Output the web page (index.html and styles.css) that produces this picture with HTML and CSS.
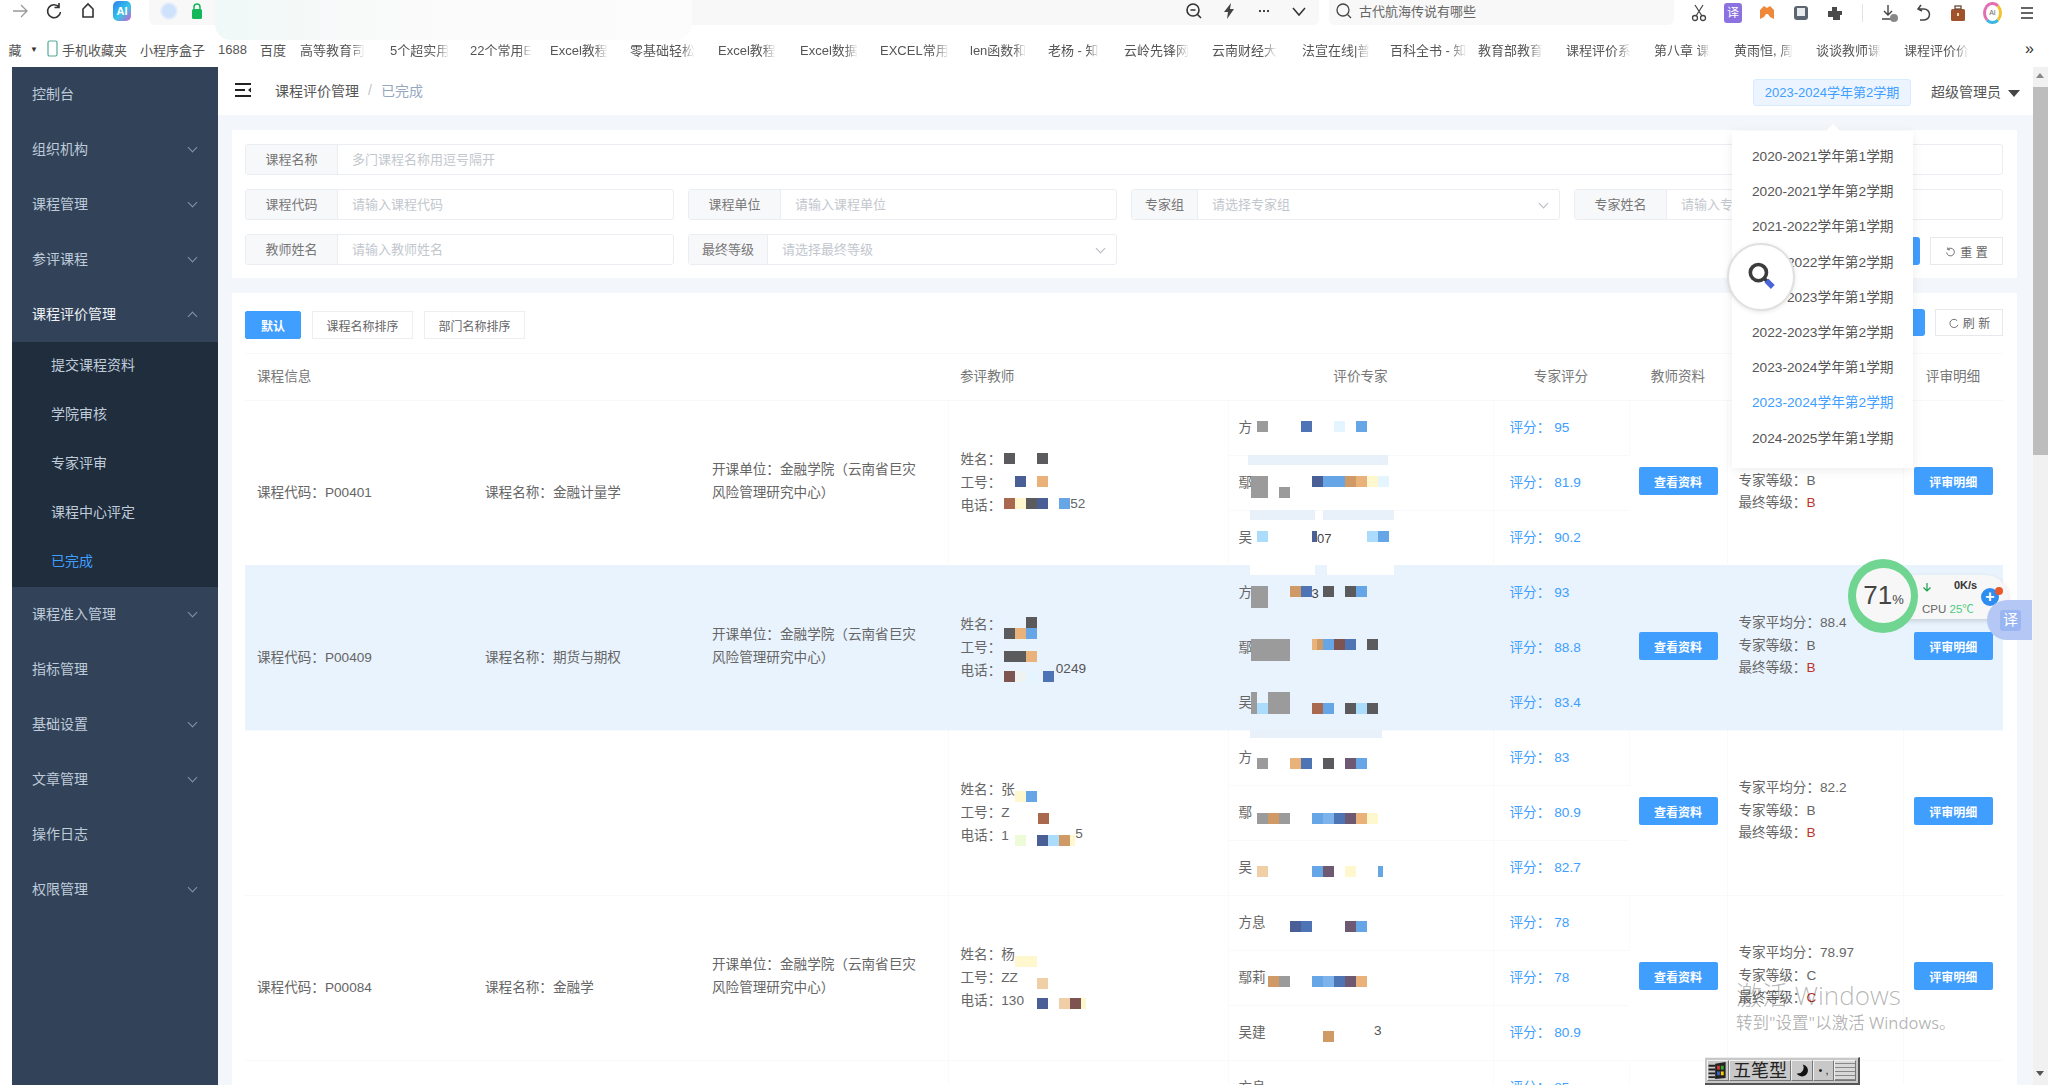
FILE: index.html
```html
<!DOCTYPE html>
<html lang="zh-CN">

<head>
    <meta charset="UTF-8" />
    <title>课程评价管理</title>
    <link rel="stylesheet" href="styles.css">
</head>

<body>
    <div class="topbar">
        <div class="nav-icons">
            <svg class="ico" viewBox="0 0 18 18"><path d="M2 9h14M10 3l6 6-6 6" fill="none" stroke="#999" stroke-width="1.3"/></svg>
            <svg class="ico" viewBox="0 0 18 18"><path d="M14 5a6.500 6.500 0 1 0 1.500 5M14 1v4.500h-4.500" fill="none" stroke="#333" stroke-width="1.600"/></svg>
            <svg class="ico" viewBox="0 0 18 18"><path d="M4 15V7l5-5 5 5v8z" fill="none" stroke="#333" stroke-width="1.600"/></svg>
            <span class="ai-badge">AI</span>
        </div>
        <div class="address">
            <span class="shield"></span>
            <svg class="ico" viewBox="0 0 18 18"><path d="M6 8V5a3 3 0 0 1 6 0v3" fill="none" stroke="#14b85a" stroke-width="1.500"/><rect x="4" y="7" width="10" height="10" rx="1.500" fill="#14b85a"/></svg>
            <span class="address-space"></span>
            <div class="address-tools">
                <svg class="ico" viewBox="0 0 18 18"><circle cx="8" cy="8" r="6" fill="none" stroke="#333" stroke-width="1.600"/><path d="M12.500 12.500L16 16M5.500 8h5" stroke="#333" stroke-width="1.600"/></svg>
                <svg class="ico" viewBox="0 0 18 18"><path d="M11 1L4 10h4l-1 7 7-10h-4z" fill="#444"/></svg>
                <svg class="ico" viewBox="0 0 18 18"><path d="M4 9h2M8 9h2M12 9h2" stroke="#444" stroke-width="2"/></svg>
                <svg class="ico" viewBox="0 0 18 18"><path d="M3 6l6 7 6-7" fill="none" stroke="#333" stroke-width="1.500"/></svg>
            </div>
        </div>
        <div class="search-box">
            <svg class="ico" viewBox="0 0 18 18"><circle cx="8" cy="8" r="6" fill="none" stroke="#444" stroke-width="1.300"/><path d="M12.500 12.500L16 16" stroke="#444" stroke-width="1.300"/></svg>
            <span>古代航海传说有哪些</span>
        </div>
        <div class="ext-icons">
            <svg class="ico" viewBox="0 0 18 18"><path d="M5 1l7 11M13 1L6 12" stroke="#444" stroke-width="1.200"/><circle cx="5" cy="14" r="2.500" fill="none" stroke="#444" stroke-width="1.300"/><circle cx="13" cy="14" r="2.500" fill="none" stroke="#444" stroke-width="1.300"/></svg>
            <span class="ext-yi">译</span>
            <svg class="ico" viewBox="0 0 18 18"><path d="M2 15V6l4-4 3 2 3-2 4 4v9l-4-2-2-3H8l-2 3z" fill="#f0883a"/></svg>
            <svg class="ico" viewBox="0 0 18 18"><rect x="2" y="2" width="14" height="14" rx="3" fill="#5d6670"/><rect x="5" y="4" width="8" height="8" fill="#e9ecef"/></svg>
            <svg class="ico" viewBox="0 0 18 18"><path d="M2 7h4V3h5v4h5v4h-2v5H7v-3H2z" fill="#4a4a4a"/></svg>
            <span class="ext-divider"></span>
            <svg class="ico" viewBox="0 0 18 18"><path d="M7 1v10M3 7l4 4 4-4M1 15h10" fill="none" stroke="#444" stroke-width="1.400"/><circle cx="13" cy="14" r="4" fill="#888"/></svg>
            <svg class="ico" viewBox="0 0 18 18"><path d="M6 1L3 5l4 2M3 5h6a5 5 0 0 1 0 11H5" fill="none" stroke="#444" stroke-width="1.500"/></svg>
            <svg class="ico" viewBox="0 0 18 18"><rect x="2" y="5" width="14" height="12" rx="1.500" fill="#a0522d"/><rect x="6" y="2" width="6" height="3" fill="none" stroke="#6b4a38" stroke-width="1.300"/><rect x="8" y="9" width="2" height="3" fill="#f3d7a5"/></svg>
            <span class="ext-round">AI</span>
            <svg class="ico" viewBox="0 0 18 18"><path d="M3 4h12M3 9h12M3 14h12" stroke="#333" stroke-width="1.500"/></svg>
        </div>
    </div>

    <div class="bookmarks">
        <span class="bm-lead">藏</span>
        <span class="bm-caret">▼</span>
        <svg class="bm-phone" viewBox="0 0 14 18"><rect x="2" y="1" width="9" height="15" rx="1.500" fill="none" stroke="#5a9" stroke-width="1.200"/></svg>
        <span class="bm w78">手机收藏夹</span>
        <span class="bm w78">小程序盒子</span>
        <span class="bm w42">1688</span>
        <span class="bm w40">百度</span>
        <span class="bm w90"><span class="fade">高等教育司</span></span>
        <span class="bm w80"><span class="fade">5个超实用</span></span>
        <span class="bm w80"><span class="fade">22个常用E</span></span>
        <span class="bm w80"><span class="fade">Excel教程</span></span>
        <span class="bm w88"><span class="fade">零基础轻松</span></span>
        <span class="bm w82"><span class="fade">Excel教程</span></span>
        <span class="bm w80"><span class="fade">Excel数据</span></span>
        <span class="bm w90"><span class="fade">EXCEL常用</span></span>
        <span class="bm w78"><span class="fade">len函数和</span></span>
        <span class="bm w76"><span class="fade">老杨 - 知</span></span>
        <span class="bm w88"><span class="fade">云岭先锋网</span></span>
        <span class="bm w90"><span class="fade">云南财经大</span></span>
        <span class="bm w88"><span class="fade">法宣在线|普</span></span>
        <span class="bm w88"><span class="fade">百科全书 - 知</span></span>
        <span class="bm w88"><span class="fade">教育部教育</span></span>
        <span class="bm w88"><span class="fade">课程评价系</span></span>
        <span class="bm w80"><span class="fade">第八章 课</span></span>
        <span class="bm w82"><span class="fade">黄雨恒, 周</span></span>
        <span class="bm w88"><span class="fade">谈谈教师课</span></span>
        <span class="bm w72"><span class="fade">课程评价价</span></span>
        <span class="bm-more">»</span>
    </div>

    <div class="app">
        <div class="sidebar">
            <a class="menu">控制台</a>
            <a class="menu has-sub">组织机构</a>
            <a class="menu has-sub">课程管理</a>
            <a class="menu has-sub">参评课程</a>
            <a class="menu has-sub open">课程评价管理</a>
            <div class="submenu">
                <a>提交课程资料</a>
                <a>学院审核</a>
                <a>专家评审</a>
                <a>课程中心评定</a>
                <a class="active">已完成</a>
            </div>
            <a class="menu has-sub">课程准入管理</a>
            <a class="menu">指标管理</a>
            <a class="menu has-sub">基础设置</a>
            <a class="menu has-sub">文章管理</a>
            <a class="menu">操作日志</a>
            <a class="menu has-sub">权限管理</a>
        </div>

        <div class="main">
            <div class="header">
                <svg class="hamburger" viewBox="0 0 16 14"><path d="M0 1h16M0 7h10M0 13h16" stroke="#222" stroke-width="2"/><path d="M16 4.500L13 7l3 2.500z" fill="#222"/></svg>
                <span class="crumb">课程评价管理</span>
                <span class="crumb-sep">/</span>
                <span class="crumb-now">已完成</span>
                <span class="header-space"></span>
                <span class="term-btn">2023-2024学年第2学期</span>
                <span class="user">超级管理员</span>
                <span class="caret"></span>
            </div>

            <div class="content">
                <div class="card filter-card">
                    <div class="filters">
                        <div class="field span-all"><label>课程名称</label><input placeholder="多门课程名称用逗号隔开"></div>
                        <div class="field"><label>课程代码</label><input placeholder="请输入课程代码"></div>
                        <div class="field"><label>课程单位</label><input placeholder="请输入课程单位"></div>
                        <div class="field"><label class="lbl-66">专家组</label><input placeholder="请选择专家组"><span class="sel-arrow"></span></div>
                        <div class="field"><label>专家姓名</label><input placeholder="请输入专家姓名"></div>
                        <div class="field"><label>教师姓名</label><input placeholder="请输入教师姓名"></div>
                        <div class="field"><label class="lbl-79">最终等级</label><input placeholder="请选择最终等级"><span class="sel-arrow"></span></div>
                        <div class="filter-btns span-two">
                            <button class="btn-search">搜 索</button>
                            <button class="btn-plain">
                                <svg viewBox="0 0 12 12"><path d="M3 2.500a4.200 4.200 0 1 1-1.200 3.500M3 .5v2.500h2.500" fill="none" stroke="#666"/></svg>重 置
                            </button>
                        </div>
                    </div>
                </div>

                <div class="card list-card">
                    <div class="tools">
                        <button class="sort on">默认</button>
                        <button class="sort">课程名称排序</button>
                        <button class="sort">部门名称排序</button>
                        <span class="tools-space"></span>
                        <button class="btn-export">导 出</button>
                        <button class="btn-refresh">
                            <svg viewBox="0 0 12 12"><path d="M10 3a4.500 4.500 0 1 0 .8 4.500" fill="none" stroke="#666"/></svg>刷 新
                        </button>
                    </div>

                    <table class="grid">
                        <colgroup>
                            <col class="c-info"><col class="c-teacher"><col class="c-expert"><col class="c-score"><col class="c-doc"><col class="c-avg"><col class="c-detail">
                        </colgroup>
                        <thead>
                            <tr>
                                <th class="left">课程信息</th>
                                <th class="left">参评教师</th>
                                <th>评价专家</th>
                                <th>专家评分</th>
                                <th>教师资料</th>
                                <th>评审结果</th>
                                <th>评审明细</th>
                            </tr>
                        </thead>
                        <tbody>
                            <!-- P00401 -->
                            <tr>
                                <td rowspan="3" class="info">
                                    <div class="info-row">
                                        <span class="i-code">课程代码：P00401</span>
                                        <span class="i-name">课程名称：金融计量学</span>
                                        <span class="i-unit">开课单位：金融学院（云南省巨灾风险管理研究中心）</span>
                                    </div>
                                </td>
                                <td rowspan="3" class="teacher">
                                    <div class="t-line">姓名：<span class="mz gap3"><i class="dk"></i><i></i><i></i><i class="dk"></i></span></div>
                                    <div class="t-line">工号：<span class="mz gap3"><i></i><i class="nv"></i><i></i><i class="or"></i></span></div>
                                    <div class="t-line">电话：<span class="mz gap3"><i class="br"></i><i class="yl"></i><i class="dk"></i><i class="nv"></i><i></i><i class="bl"></i></span>52</div>
                                </td>
                                <td class="expert"><span class="en">方</span><span class="mz"><i class="gy"></i><i></i><i></i><i></i><i class="bn"></i><i></i><i></i><i class="pl"></i><i></i><i class="bl"></i></span></td>
                                <td class="score">评分：<b>95</b></td>
                                <td rowspan="3" class="act"><button class="btn-blue">查看资料</button></td>
                                <td rowspan="3" class="avg">
                                    <div>专家平均分：86.3</div>
                                    <div>专家等级：B</div>
                                    <div>最终等级：<em>B</em></div>
                                </td>
                                <td rowspan="3" class="act"><button class="btn-blue">评审明细</button></td>
                            </tr>
                            <tr>
                                <td class="expert"><span class="en">鄢</span><span class="mz"><i class="gy tl back"></i><i></i><i class="gy low"></i><i></i><i></i><i class="nv"></i><i class="bl"></i><i class="bl"></i><i class="tn"></i><i class="or"></i><i class="yl"></i><i class="pl"></i></span></td>
                                <td class="score">评分：<b>81.9</b></td>
                            </tr>
                            <tr>
                                <td class="expert"><span class="en">吴</span><span class="mz"><i class="lb"></i><i></i><i></i><i></i><i></i><i class="nv half"></i><b class="mz-text">07</b><i></i><i></i><i class="lb"></i><i class="bl"></i></span></td>
                                <td class="score">评分：<b>90.2</b></td>
                            </tr>

                            <!-- P00409 -->
                            <tr class="on">
                                <td rowspan="3" class="info">
                                    <div class="info-row">
                                        <span class="i-code">课程代码：P00409</span>
                                        <span class="i-name">课程名称：期货与期权</span>
                                        <span class="i-unit">开课单位：金融学院（云南省巨灾风险管理研究中心）</span>
                                    </div>
                                </td>
                                <td rowspan="3" class="teacher">
                                    <div class="t-line">姓名：<span class="mz gap3 dn10"><i class="dk"></i><i class="or"></i><i class="bl cap-dk"></i></span></div>
                                    <div class="t-line">工号：<span class="mz gap3 dn10"><i class="dk"></i><i class="dk"></i><i class="or"></i></span></div>
                                    <div class="t-line">电话：<span class="mz gap3 dn8"><i class="mr"></i><i class="pl-soft"></i><i class="pl"></i><i class="half"></i><i class="bn"></i></span><span class="tail">0249</span></div>
                                </td>
                                <td class="expert"><span class="en">方</span><span class="mz"><i class="gy tl back"></i><i></i><i></i><i class="tn"></i><i class="bn"></i><b class="mz-text small">3</b><i class="dk"></i><i></i><i class="dk"></i><i class="bl"></i></span></td>
                                <td class="score">评分：<b>93</b></td>
                                <td rowspan="3" class="act"><button class="btn-blue">查看资料</button></td>
                                <td rowspan="3" class="avg">
                                    <div>专家平均分：88.4</div>
                                    <div>专家等级：B</div>
                                    <div>最终等级：<em>B</em></div>
                                </td>
                                <td rowspan="3" class="act"><button class="btn-blue">评审明细</button></td>
                            </tr>
                            <tr class="on">
                                <td class="expert"><span class="en">鄢</span><span class="mz up2"><i class="gy tl w3"></i><i></i><i></i><i class="or half"></i><i class="tn half"></i><i class="bl"></i><i class="mr"></i><i class="bn"></i><i></i><i class="dk"></i></span></td>
                                <td class="score">评分：<b>88.8</b></td>
                            </tr>
                            <tr class="on">
                                <td class="expert"><span class="en">吴</span><span class="mz dn7"><i class="gy nib up-tall"></i><i class="lb"></i><i class="gy up-tall w2"></i><i></i><i></i><i class="br"></i><i class="bl"></i><i></i><i class="dk"></i><i class="lb"></i><i class="dk"></i></span></td>
                                <td class="score">评分：<b>83.4</b></td>
                            </tr>

                            <!-- 张 -->
                            <tr>
                                <td rowspan="3" class="info"></td>
                                <td rowspan="3" class="teacher">
                                    <div class="t-line">姓名：张<span class="mz dn8"><i class="yl"></i><i class="bl"></i></span></div>
                                    <div class="t-line">工号：Z<span class="mz dn7 gap6"><i></i><i></i><i class="br"></i></span></div>
                                    <div class="t-line">电话：1<span class="mz dn7 gap6"><i class="pl-green"></i><i></i><i class="nv"></i><i class="lb"></i><i class="tn"></i><i class="yl half"></i></span>5</div>
                                </td>
                                <td class="expert"><span class="en">方</span><span class="mz dn7"><i class="gy"></i><i></i><i></i><i class="or"></i><i class="bn"></i><i></i><i class="dk"></i><i></i><i class="pk"></i><i class="bl"></i></span></td>
                                <td class="score">评分：<b>83</b></td>
                                <td rowspan="3" class="act"><button class="btn-blue">查看资料</button></td>
                                <td rowspan="3" class="avg">
                                    <div>专家平均分：82.2</div>
                                    <div>专家等级：B</div>
                                    <div>最终等级：<em>B</em></div>
                                </td>
                                <td rowspan="3" class="act"><button class="btn-blue">评审明细</button></td>
                            </tr>
                            <tr>
                                <td class="expert"><span class="en">鄢</span><span class="mz dn7"><i class="gy"></i><i class="tn"></i><i class="gy"></i><i></i><i></i><i class="bl"></i><i class="lb2"></i><i class="bn"></i><i class="pk"></i><i class="or"></i><i class="yl"></i></span></td>
                                <td class="score">评分：<b>80.9</b></td>
                            </tr>
                            <tr>
                                <td class="expert"><span class="en">吴</span><span class="mz dn5"><i class="pc"></i><i></i><i></i><i></i><i></i><i class="bl"></i><i class="pk"></i><i></i><i class="yl"></i><i></i><i></i><i class="bl half"></i></span></td>
                                <td class="score">评分：<b>82.7</b></td>
                            </tr>

                            <!-- P00084 -->
                            <tr>
                                <td rowspan="3" class="info">
                                    <div class="info-row">
                                        <span class="i-code">课程代码：P00084</span>
                                        <span class="i-name">课程名称：金融学</span>
                                        <span class="i-unit">开课单位：金融学院（云南省巨灾风险管理研究中心）</span>
                                    </div>
                                </td>
                                <td rowspan="3" class="teacher">
                                    <div class="t-line">姓名：杨<span class="mz dn8"><i class="yl"></i><i class="yl"></i></span></div>
                                    <div class="t-line">工号：ZZ<span class="mz dn7 gap8"><i></i><i class="pc"></i></span></div>
                                    <div class="t-line">电话：130<span class="mz dn5 gap13"><i class="nv"></i><i></i><i class="pc"></i><i class="mr"></i><i class="yl half"></i></span></div>
                                </td>
                                <td class="expert"><span class="en">方息</span><span class="mz dn5"><i></i><i></i><i></i><i class="nv"></i><i class="bn"></i><i></i><i></i><i></i><i class="pk"></i><i class="bl"></i></span></td>
                                <td class="score">评分：<b>78</b></td>
                                <td rowspan="3" class="act"><button class="btn-blue">查看资料</button></td>
                                <td rowspan="3" class="avg">
                                    <div>专家平均分：78.97</div>
                                    <div>专家等级：C</div>
                                    <div>最终等级：<em>C</em></div>
                                </td>
                                <td rowspan="3" class="act"><button class="btn-blue">评审明细</button></td>
                            </tr>
                            <tr>
                                <td class="expert"><span class="en">鄢莉</span><span class="mz dn5"><i></i><i class="tn"></i><i class="gy"></i><i></i><i></i><i class="bl"></i><i class="lb2"></i><i class="bn"></i><i class="pk"></i><i class="or"></i></span></td>
                                <td class="score">评分：<b>78</b></td>
                            </tr>
                            <tr>
                                <td class="expert"><span class="en">吴建</span><span class="mz dn5"><i></i><i></i><i></i><i></i><i></i><i></i><i class="tn"></i><i></i><i></i><i></i><i class="half"></i></span><span class="tail">3</span></td>
                                <td class="score">评分：<b>80.9</b></td>
                            </tr>

                            <tr>
                                <td class="info"></td>
                                <td class="teacher"></td>
                                <td class="expert"><span class="en">方息</span></td>
                                <td class="score">评分：<b>85</b></td>
                                <td></td>
                                <td></td>
                                <td></td>
                            </tr>
                        </tbody>
                    </table>
                </div>
            </div>
        </div>

        <div class="scrollbar">
            <span class="sb-up"></span>
            <span class="sb-thumb"></span>
            <span class="sb-space"></span>
            <span class="sb-down"></span>
        </div>
    </div>

    <!-- things that float over the page -->
    <div class="blur-blob"></div>

    <span class="smear s1"></span>
    <span class="smear s2"></span>
    <span class="smear s3"></span>
    <span class="smear s4 white"></span>
    <span class="smear s5 white"></span>
    <span class="smear s6"></span>

    <div class="term-menu">
        <span class="term-tip"></span>
        <a>2020-2021学年第1学期</a>
        <a>2020-2021学年第2学期</a>
        <a>2021-2022学年第1学期</a>
        <a>2021-2022学年第2学期</a>
        <a>2022-2023学年第1学期</a>
        <a>2022-2023学年第2学期</a>
        <a>2023-2024学年第1学期</a>
        <a class="current">2023-2024学年第2学期</a>
        <a>2024-2025学年第1学期</a>
    </div>

    <div class="magnifier">
        <svg viewBox="0 0 40 40"><circle cx="16" cy="14" r="9" fill="none" stroke="#3c3c3c" stroke-width="4"/><path d="M23 21l3 3" stroke="#3c3c3c" stroke-width="4"/><path d="M25 23l7 7" stroke="#4a63d8" stroke-width="6"/></svg>
    </div>

    <div class="speed-pill">
        <svg class="speed-arrow" viewBox="0 0 10 10"><path d="M5 1v8M1.500 5.500L5 9l3.500-3.500" fill="none" stroke="#17a04a" stroke-width="1.200"/></svg>
        <span class="speed-rate">0K/s</span>
        <span class="speed-cpu">CPU <em>25℃</em></span>
        <span class="speed-plus">+</span>
        <span class="speed-dot"></span>
    </div>
    <div class="speed-ring"><span class="ring-inner">71<small>%</small></span></div>
    <div class="yi-tab"><span>译</span></div>

    <div class="win-mark">
        <div class="win-title">激活 Windows</div>
        <div class="win-sub">转到"设置"以激活 Windows。</div>
    </div>

    <div class="ime-bar">
        <span class="ime-cell ime-logo">
            <svg viewBox="0 0 20 20"><path d="M0 4h7v2H0zM0 8h7v2H0zM0 12h7v2H0zM0 16h7v2H0z" fill="#222"/><path d="M7 3l11-2v17l-11 1z" fill="#222"/><rect x="9" y="5" width="3" height="4" fill="#d33"/><rect x="13" y="5" width="3" height="4" fill="#3a3"/><rect x="9" y="11" width="3" height="4" fill="#36c"/><rect x="13" y="11" width="3" height="4" fill="#fc0"/></svg>
        </span>
        <span class="ime-cell ime-name">五笔型</span>
        <span class="ime-cell ime-moon">
            <svg viewBox="0 0 20 20"><path d="M11 2a8 8 0 1 1-8 12 8 8 0 0 0 8-12z" fill="#111"/></svg>
        </span>
        <span class="ime-cell ime-dots">• ,</span>
        <span class="ime-cell ime-keys"></span>
    </div>
</body>

</html>
```

FILE: styles.css
```css
* {
    box-sizing: border-box;
    margin: 0;
    padding: 0;
}

html,
body {
    width: 2048px;
    height: 1085px;
    overflow: hidden;
}

body {
    background: #fff;
    font-family: "Liberation Sans", "Noto Sans CJK SC", sans-serif;
    font-size: 14px;
    color: #606266;
    display: flex;
    flex-direction: column;
}

button {
    font-family: inherit;
    cursor: pointer;
}

/* browser chrome */
.topbar {
    height: 25px;
    display: flex;
    align-items: flex-start;
    flex: none;
    background: #fff;
}

.ico {
    width: 18px;
    height: 18px;
    flex: none;
}

.nav-icons {
    display: flex;
    align-items: center;
    gap: 16px;
    padding: 1px 0 0 11px;
}

.ai-badge {
    width: 18px;
    height: 20px;
    border-radius: 5px;
    background: linear-gradient(135deg, #2d7df0, #35c5e8 55%, #d05cd0);
    color: #fff;
    font-size: 11px;
    font-weight: bold;
    text-align: center;
    line-height: 20px;
}

.address {
    margin-left: 18px;
    width: 1170px;
    height: 25px;
    background: #f8f8f8;
    border-radius: 0 0 6px 6px;
    display: flex;
    align-items: center;
    gap: 10px;
    padding: 0 11px 3px;
}

.shield {
    width: 18px;
    height: 18px;
    border-radius: 50%;
    background: #cfe2fb;
    border: 2px solid #e6eef9;
}

.address-space {
    flex: 1;
}

.address-tools {
    display: flex;
    gap: 17px;
}

.search-box {
    margin-left: 10px;
    width: 345px;
    height: 25px;
    background: #f8f8f8;
    border-radius: 0 0 6px 6px;
    display: flex;
    align-items: center;
    gap: 6px;
    padding: 0 0 4px 6px;
    font-size: 13px;
    color: #666;
}

.ext-icons {
    margin-left: 16px;
    display: flex;
    align-items: center;
    gap: 16px;
    padding-top: 2px;
}

.ext-yi {
    width: 18px;
    height: 20px;
    background: #8b72e0;
    color: #fff;
    border-radius: 3px;
    font-size: 12px;
    text-align: center;
    line-height: 20px;
}

.ext-divider {
    width: 1px;
    height: 18px;
    background: #e3e3e3;
    margin: 0 2px;
}

.ext-round {
    width: 19px;
    height: 22px;
    border-radius: 50%;
    border: 3px solid #e26fb0;
    border-right-color: #f2c230;
    border-bottom-color: #3db6e0;
    color: #666;
    font-size: 7px;
    text-align: center;
    line-height: 16px;
}

.bookmarks {
    height: 42px;
    flex: none;
    display: flex;
    align-items: center;
    font-size: 13px;
    color: #555;
    padding-top: 6px;
    white-space: nowrap;
}

.bm-lead {
    width: 30px;
    text-align: center;
}

.bm-caret {
    width: 14px;
    font-size: 8px;
    color: #333;
}

.bm-phone {
    width: 18px;
    height: 18px;
}

.bm {
    flex: none;
}

/* long bookmark titles fade out at the end */
.fade {
    display: inline-block;
    -webkit-mask-image: linear-gradient(to right, #000 78%, transparent 100%);
    mask-image: linear-gradient(to right, #000 78%, transparent 100%);
}

.w40 { width: 40px; }
.w42 { width: 42px; }
.w72 { width: 72px; margin-right: 49px; }
.w76 { width: 76px; }
.w78 { width: 78px; }
.w80 { width: 80px; }
.w82 { width: 82px; }
.w88 { width: 88px; }
.w90 { width: 90px; }

.bm-more {
    font-size: 16px;
    color: #333;
}

/* app frame */
.app {
    flex: 1;
    min-height: 0;
    display: flex;
    padding-left: 12px;
}

.sidebar {
    width: 206px;
    flex: none;
    background: #324359;
    color: #bfcbd9;
}

.sidebar a {
    display: block;
    position: relative;
}

.menu {
    height: 55px;
    line-height: 55px;
    padding-left: 20px;
}

.has-sub::after {
    content: "";
    position: absolute;
    right: 22px;
    top: 22px;
    width: 6px;
    height: 6px;
    border-right: 1px solid #8594a6;
    border-bottom: 1px solid #8594a6;
    transform: rotate(45deg);
}

.menu.open {
    color: #eef1f5;
}

.menu.open::after {
    top: 26px;
    transform: rotate(225deg);
}

.submenu {
    background: #1f2d3d;
}

.submenu a {
    height: 49px;
    line-height: 46px;
    padding-left: 39px;
}

.submenu .active {
    color: #409eff;
}

.main {
    flex: 1;
    min-width: 0;
    background: #f3f6fa;
}

.header {
    height: 48px;
    background: #fff;
    display: flex;
    align-items: center;
    padding-left: 17px;
}

.hamburger {
    width: 16px;
    height: 14px;
    margin-bottom: 2px;
}

.crumb {
    margin: 0 0 2px 24px;
    color: #555;
}

.crumb-sep {
    margin: 0 9px 2px;
    color: #c0c4cc;
}

.crumb-now {
    margin-bottom: 2px;
    color: #97a8be;
}

.header-space {
    flex: 1;
}

.term-btn {
    width: 158px;
    height: 27px;
    margin-top: 3px;
    line-height: 25px;
    text-align: center;
    background: #ecf5ff;
    border: 1px solid #d9ecff;
    border-radius: 3px;
    color: #409eff;
    font-size: 13px;
}

.user {
    margin-left: 20px;
    color: #555;
}

.caret {
    margin: 4px 13px 0 7px;
    border-left: 6px solid transparent;
    border-right: 6px solid transparent;
    border-top: 7px solid #444;
}

.content {
    padding: 15px 16px 0 14px;
}

.card {
    background: #fff;
}

.filter-card {
    padding: 14px 14px 13px 13px;
    margin-bottom: 15px;
}

.filters {
    display: grid;
    grid-template-columns: repeat(4, 1fr);
    gap: 14px;
}

.span-all {
    grid-column: 1 / -1;
}

.span-two {
    grid-column: span 2;
}

.field {
    height: 31px;
    display: flex;
    align-items: center;
    border: 1px solid #eaedf1;
    border-radius: 3px;
    background: #fff;
}

.field label {
    width: 92px;
    height: 100%;
    flex: none;
    background: #f7f8fa;
    border-right: 1px solid #eaedf1;
    color: #777;
    font-size: 13px;
    line-height: 29px;
    text-align: center;
}

.field label.lbl-66 {
    width: 66px;
}

.field label.lbl-79 {
    width: 79px;
}

.field input {
    flex: 1;
    min-width: 0;
    height: 100%;
    border: none;
    background: transparent;
    padding-left: 14px;
    font-family: inherit;
    font-size: 13px;
}

.field input::placeholder {
    color: #c3c7ce;
}

.sel-arrow {
    width: 7px;
    height: 7px;
    margin: 0 12px 3px 0;
    flex: none;
    border-right: 1px solid #b5b9c0;
    border-bottom: 1px solid #b5b9c0;
    transform: rotate(45deg);
}

.filter-btns {
    display: flex;
    justify-content: flex-end;
    align-items: flex-end;
    gap: 10px;
}

.btn-search {
    width: 73px;
    height: 28px;
    border: none;
    border-radius: 3px;
    background: #409eff;
    color: #fff;
    font-size: 12px;
}

.btn-plain {
    width: 73px;
    height: 28px;
    border: 1px solid #e6e8eb;
    background: #fff;
    color: #666;
    font-size: 12px;
}

.btn-plain svg,
.btn-refresh svg {
    width: 11px;
    height: 11px;
    margin-right: 4px;
    vertical-align: -1px;
}

.list-card {
    padding: 18px 14px 0 13px;
}

.tools {
    display: flex;
    align-items: flex-start;
    gap: 11px;
    height: 42px;
}

.sort {
    width: 101px;
    height: 28px;
    background: #fff;
    border: 1px solid #eceef1;
    color: #666;
    font-size: 12px;
}

.sort.on {
    width: 56px;
    background: #409eff;
    border-color: #409eff;
    border-radius: 2px;
    color: #fff;
    font-weight: bold;
}

.tools-space {
    flex: 1;
}

.btn-export {
    width: 73px;
    height: 27px;
    margin-top: -2px;
    margin-right: -1px;
    border: none;
    border-radius: 3px;
    background: #409eff;
    color: #fff;
    font-size: 12px;
}

.btn-refresh {
    width: 68px;
    height: 27px;
    margin-top: -2px;
    border: 1px solid #e6e8eb;
    background: #fff;
    color: #666;
    font-size: 12px;
}

/* table */
.grid {
    width: 1758px;
    table-layout: fixed;
    border-collapse: collapse;
    font-size: 13.6px;
    color: #666;
}

.c-info { width: 703px; }
.c-teacher { width: 280px; }
.c-expert { width: 265px; }
.c-score { width: 136px; }
.c-doc { width: 98px; }
.c-avg { width: 176px; }
.c-detail { width: 100px; }

.grid th {
    height: 47px;
    padding-bottom: 4px;
    font-weight: normal;
    color: #777;
    border-top: 1px solid #f7f8f9;
    border-bottom: 1px solid #f7f8f9;
}

.grid th.left {
    text-align: left;
    padding-left: 12px;
}

.grid td {
    height: 55px;
    padding: 0 0 4px;
    border-top: 1px solid #f8f9fa;
    border-right: 1px solid #f9fafb;
}

.grid td:last-child {
    border-right: none;
}

.grid tr.on td {
    background: #e9f3fd;
    border-color: #e9f3fd;
}

.info {
    padding-left: 12px !important;
}

.info-row {
    display: flex;
    align-items: flex-end;
    line-height: 23px;
}

.i-code {
    width: 228px;
    flex: none;
}

.i-name {
    width: 227px;
    flex: none;
}

.i-unit {
    width: 212px;
    flex: none;
}

.teacher {
    padding-left: 12px !important;
}

.t-line {
    height: 22.6px;
    display: flex;
    align-items: center;
    white-space: nowrap;
}

.tail {
    margin-left: 2px;
    color: #555;
}

.expert {
    padding-left: 10px !important;
}

.expert .en {
    display: inline-block;
    width: 18px;
    white-space: nowrap;
    vertical-align: middle;
}

/* privacy mosaic, one cell is 11px */
.mz {
    display: inline-flex;
    align-items: flex-start;
    height: 11px;
    vertical-align: middle;
}

.mz i {
    display: block;
    width: 11px;
    height: 11px;
    flex: none;
}

.mz .half { width: 5.5px; }
.mz .w2 { width: 22px; }
.mz .w3 { width: 39px; margin-left: -6px; }
.mz .tl { height: 22px; }
.mz .low { transform: translateY(11px); }
.mz .back { width: 17px; margin-left: -6px; }
.mz .nib { width: 6px; margin-left: -6px; }
.mz .up-tall { height: 22px; margin-top: -11px; }
.mz .cap-dk { box-shadow: 0 -11px 0 #5a5a5a; }

.mz-text {
    width: 28px;
    font-size: 13px;
    font-weight: normal;
    color: #444;
}

.mz-text.small {
    width: 11px;
}

.gap3 { margin-left: 3px; }
.gap6 { margin-left: 6px; }
.gap8 { margin-left: 8px; }
.gap13 { margin-left: 13px; }
.dn5 { transform: translateY(5px); }
.dn7 { transform: translateY(7px); }
.dn8 { transform: translateY(8px); }
.dn10 { transform: translateY(10px); }
.up2 { transform: translateY(-2px); }

.dk { background: #5b5b5d; }
.nv { background: #4a5f95; }
.bl { background: #67a6e6; }
.lb2 { background: #7cb3ea; }
.bn { background: #4f74b5; }
.tn { background: #cf9a66; }
.or { background: #e8b27a; }
.pc { background: #f1cfa6; }
.yl { background: #fff8cf; }
.pl { background: #e4f5ff; }
.pl-soft { background: #eef2f0; }
.pl-green { background: #eefbd8; }
.gy { background: #9b9b9b; }
.br { background: #a8694f; }
.pk { background: #6d5a72; }
.lb { background: #acdcfc; }
.mr { background: #7d5450; }

.score {
    padding-left: 16px !important;
    color: #409eff;
}

.score b {
    font-weight: normal;
    margin-left: 4px;
}

.act {
    text-align: center;
}

.btn-blue {
    width: 79px;
    height: 28px;
    border: none;
    border-radius: 2px;
    background: #409eff;
    color: #fff;
    font-size: 12px;
    font-weight: bold;
}

.avg {
    padding-left: 11px !important;
    line-height: 22.6px;
}

.avg em {
    font-style: normal;
    color: #b8342c;
}

/* scrollbar */
.scrollbar {
    width: 15px;
    flex: none;
    background: #f1f1f1;
    display: flex;
    flex-direction: column;
    align-items: stretch;
}

.sb-up,
.sb-down {
    height: 20px;
    flex: none;
    position: relative;
}

.sb-up::after,
.sb-down::after {
    content: "";
    position: absolute;
    left: 3px;
    border-left: 4px solid transparent;
    border-right: 4px solid transparent;
}

.sb-up::after {
    top: 6px;
    border-bottom: 5px solid #888;
}

.sb-down::after {
    top: 6px;
    border-top: 5px solid #555;
}

.sb-thumb {
    height: 368px;
    flex: none;
    background: #bdbdbd;
}

.sb-space {
    flex: 1;
}

/* overlays */
.blur-blob {
    position: absolute;
    left: 215px;
    top: 0;
    width: 477px;
    height: 40px;
    border-radius: 0 0 16px 16px;
    background: linear-gradient(to right, #eff9f7 0, #f3f9f8 12%, #fafafa 40%, #fcfcfc 100%);
}

.smear {
    position: absolute;
    height: 10px;
    background: #e8f0fa;
}

.smear.white {
    background: #fff;
}

.s1 { left: 1248px; top: 455px; width: 140px; }
.s2 { left: 1250px; top: 510px; width: 65px; }
.s3 { left: 1323px; top: 510px; width: 71px; }
.s4 { left: 1250px; top: 565px; width: 65px; }
.s5 { left: 1327px; top: 565px; width: 67px; }
.s6 { left: 1250px; top: 730px; width: 132px; height: 8px; }

.term-menu {
    position: absolute;
    left: 1732px;
    top: 131px;
    width: 181px;
    height: 337px;
    padding: 8px 0;
    background: #fff;
    box-shadow: 0 2px 10px rgba(0, 0, 0, 0.08);
    font-size: 13.7px;
    color: #555;
}

.term-menu a {
    display: block;
    height: 35.2px;
    line-height: 35.2px;
    padding-left: 20px;
    white-space: nowrap;
}

.term-menu .current {
    color: #409eff;
}

.term-tip {
    position: absolute;
    left: 96px;
    top: -5px;
    width: 10px;
    height: 10px;
    background: #fff;
    transform: rotate(45deg);
}

.magnifier {
    position: absolute;
    left: 1727px;
    top: 243px;
    width: 68px;
    height: 68px;
    border-radius: 50%;
    background: #fff;
    border: 2px solid #e0e0e0;
    box-shadow: 0 1px 4px rgba(0, 0, 0, 0.1);
    padding: 15px 13px 13px 15px;
}

.speed-pill {
    position: absolute;
    left: 1885px;
    top: 575px;
    width: 123px;
    height: 44px;
    border-radius: 0 22px 22px 0;
    background: #f7f7f7;
    box-shadow: 0 2px 5px rgba(0, 0, 0, 0.15);
    font-size: 12px;
    color: #666;
}

.speed-arrow {
    position: absolute;
    left: 37px;
    top: 7px;
    width: 10px;
    height: 10px;
}

.speed-rate {
    position: absolute;
    left: 69px;
    top: 4px;
    font-size: 11px;
    font-weight: bold;
    color: #333;
}

.speed-cpu {
    position: absolute;
    left: 37px;
    top: 25px;
    font-size: 11.500px;
}

.speed-cpu em {
    font-style: normal;
    color: #4ccb7e;
}

.speed-plus {
    position: absolute;
    left: 96px;
    top: 13px;
    width: 18px;
    height: 18px;
    border-radius: 50%;
    background: #2f8cf0;
    color: #fff;
    font-size: 16px;
    font-weight: bold;
    line-height: 17px;
    text-align: center;
}

.speed-dot {
    position: absolute;
    left: 110px;
    top: 12px;
    width: 8px;
    height: 8px;
    border-radius: 50%;
    background: #e8582a;
}

.speed-ring {
    position: absolute;
    left: 1848px;
    top: 559px;
    width: 70px;
    height: 74px;
    border-radius: 50%;
    background: #6fd590;
    padding: 7px 7px 8px 8px;
}

.ring-inner {
    display: block;
    width: 55px;
    height: 55px;
    margin-top: 2px;
    border-radius: 50%;
    background: #f7f7f7;
    color: #444;
    font-size: 26px;
    font-weight: 300;
    line-height: 55px;
    text-align: center;
}

.ring-inner small {
    font-size: 13px;
}

.yi-tab {
    position: absolute;
    left: 1987px;
    top: 600px;
    width: 45px;
    height: 40px;
    border-radius: 20px 0 0 20px;
    background: #b4c7f5;
    padding: 10px 0 0 13px;
}

.yi-tab span {
    display: block;
    width: 21px;
    height: 21px;
    border-radius: 3px;
    background: #9ab6f2;
    color: #fff;
    font-size: 15px;
    line-height: 20px;
    text-align: center;
}

.win-mark {
    position: absolute;
    left: 1736px;
    top: 980px;
    color: rgba(0, 0, 0, 0.3);
}

.win-title {
    font-size: 26px;
    line-height: 30px;
    font-family: "Open Sans", "Noto Sans CJK SC", sans-serif;
    font-weight: 300;
}

.win-sub {
    font-size: 16.5px;
    line-height: 26px;
    font-family: "Open Sans", "Noto Sans CJK SC", sans-serif;
}

.ime-bar {
    position: absolute;
    left: 1705px;
    top: 1057px;
    width: 155px;
    height: 28px;
    display: flex;
    padding: 2px;
    background: #c8c8c8;
    border-top: 1px solid #eee;
    border-right: 2px solid #555;
    border-bottom: 2px solid #555;
}

.ime-cell {
    height: 100%;
    flex: none;
    border: 1px solid;
    border-color: #f0f0f0 #777 #777 #f0f0f0;
    text-align: center;
    color: #222;
}

.ime-cell svg {
    display: block;
    width: 100%;
    height: 100%;
}

.ime-logo {
    width: 22px;
}

.ime-name {
    width: 62px;
    font-size: 18px;
    line-height: 20px;
}

.ime-moon {
    width: 22px;
    padding: 2px;
}

.ime-dots {
    width: 21px;
    font-size: 11px;
    line-height: 18px;
}

.ime-keys {
    width: 22px;
    background: repeating-linear-gradient(0deg, #888 0 1px, #d8d8d8 1px 4px);
}
```
